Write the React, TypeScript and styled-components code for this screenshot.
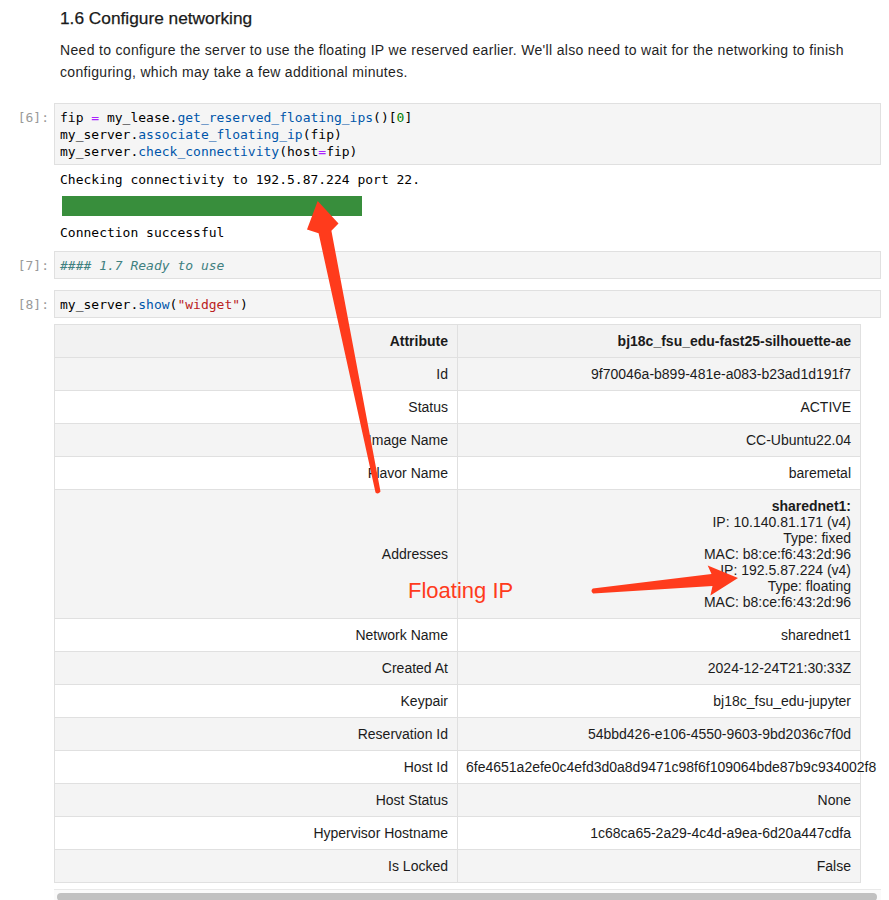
import React from "react";
import styled, { createGlobalStyle } from "styled-components";

const Global = createGlobalStyle`
  html, body { margin: 0; padding: 0; background: #ffffff; }
  body { font-family: "Liberation Sans", Arial, sans-serif; color: #1b1b1b; }
`;

const Page = styled.div`
  position: relative;
  width: 889px;
  height: 900px;
  overflow: hidden;
  padding-top: 6px;
  box-sizing: border-box;
`;

const Markdown = styled.div`
  padding: 0 8px 0 60px;
`;

const Heading = styled.h3`
  margin: 0;
  font-size: 17.3px;
  font-weight: normal;
  line-height: 24px;
  color: #1a1a1a;
  -webkit-text-stroke: 0.25px #1a1a1a;
`;

const Para = styled.p`
  margin: 9px 0 0;
  font-size: 14px;
  line-height: 22px;
  letter-spacing: 0.32px;
  color: #1f1f1f;
`;

const Cell = styled.div<{ $gap: number }>`
  margin-top: ${(p) => p.$gap}px;
`;

const Row = styled.div`
  display: flex;
  align-items: flex-start;
`;

const Prompt = styled.div`
  width: 54px;
  flex: none;
  box-sizing: border-box;
  padding: 6px 5px 0 0;
  text-align: right;
  font: 13px/17px "DejaVu Sans Mono", monospace;
  color: #9a9a9a;
`;

const InputBox = styled.div`
  width: 827px;
  box-sizing: border-box;
  border: 1px solid #e0e0e0;
  background: #f5f5f5;
  padding: 5px 5px 4px;
  font: 13px/17px "DejaVu Sans Mono", monospace;
  white-space: pre;
  color: #000;
`;

const Op = styled.span`
  color: #aa22ff;
`;
const Fn = styled.span`
  color: #0055aa;
`;
const Num = styled.span`
  color: #008000;
`;
const Str = styled.span`
  color: #ba2121;
`;
const Comment = styled.span`
  color: #408080;
  font-style: italic;
`;

const Output = styled.div<{ $top: number }>`
  flex: 1;
  min-width: 0;
  padding: ${(p) => p.$top}px 0 0 6px;
`;

const Stream = styled.div<{ $gap?: number }>`
  font: 13px/17px "DejaVu Sans Mono", monospace;
  color: #000;
  white-space: pre;
  margin-top: ${(p) => p.$gap ?? 0}px;
`;

const Progress = styled.div`
  width: 300px;
  height: 20px;
  margin: 8px 0 0 2px;
  background: #388e3c;
`;

const TableScroll = styled.div`
  width: 827px;
  margin-left: -6px;
  overflow: hidden;
`;

const Table = styled.table`
  width: 807px;
  table-layout: fixed;
  border-collapse: collapse;
  font-size: 14px;
  line-height: 16px;
  color: #1b1b1b;
`;

const Th = styled.th`
  border: 1px solid #e0e0e0;
  padding: 8px 9px 8px 8px;
  text-align: right;
  font-weight: bold;
  white-space: nowrap;
  background: #f2f2f2;
`;

const Tr = styled.tr`
  &:nth-child(odd) {
    background: #f4f4f4;
  }
`;

const Td = styled.td`
  border: 1px solid #e0e0e0;
  padding: 8px 9px 8px 8px;
  text-align: right;
  white-space: nowrap;
  vertical-align: middle;
`;

const Line = styled.div<{ $bold?: boolean }>`
  font-weight: ${(p) => (p.$bold ? "bold" : "normal")};
`;

const Track = styled.div`
  width: 827px;
  box-sizing: border-box;
  margin: 6px 0 0 -6px;
  border-top: 1px solid #e9e9e9;
  background: #fafafa;
  padding: 3px 3px 0;
  height: 16px;
`;

const Thumb = styled.div`
  height: 8px;
  width: 820px;
  border-radius: 4px;
  background: #c1c1c1;
`;

const Overlay = styled.svg`
  position: absolute;
  left: 0;
  top: 0;
  pointer-events: none;
`;

const Label = styled.div`
  position: absolute;
  left: 408px;
  top: 580px;
  font-size: 22px;
  line-height: 22px;
  color: #ff3b1c;
  white-space: nowrap;
`;

const rows: [string, React.ReactNode][] = [
  ["Id", "9f70046a-b899-481e-a083-b23ad1d191f7"],
  ["Status", "ACTIVE"],
  ["Image Name", "CC-Ubuntu22.04"],
  ["Flavor Name", "baremetal"],
  [
    "Addresses",
    <>
      <Line $bold>sharednet1:</Line>
      <Line>IP: 10.140.81.171 (v4)</Line>
      <Line>Type: fixed</Line>
      <Line>MAC: b8:ce:f6:43:2d:96</Line>
      <Line>IP: 192.5.87.224 (v4)</Line>
      <Line>Type: floating</Line>
      <Line>MAC: b8:ce:f6:43:2d:96</Line>
    </>,
  ],
  ["Network Name", "sharednet1"],
  ["Created At", "2024-12-24T21:30:33Z"],
  ["Keypair", "bj18c_fsu_edu-jupyter"],
  ["Reservation Id", "54bbd426-e106-4550-9603-9bd2036c7f0d"],
  ["Host Id", "6fe4651a2efe0c4efd3d0a8d9471c98f6f109064bde87b9c934002f8"],
  ["Host Status", "None"],
  ["Hypervisor Hostname", "1c68ca65-2a29-4c4d-a9ea-6d20a447cdfa"],
  ["Is Locked", "False"],
];

export default function App() {
  return (
    <>
      <Global />
      <Page>
        <Markdown>
          <Heading>1.6 Configure networking</Heading>
          <Para>
            Need to configure the server to use the floating IP we reserved earlier. We'll also need to wait for the
            networking to finish configuring, which may take a few additional minutes.
          </Para>
        </Markdown>

        <Cell $gap={20}>
          <Row>
            <Prompt>[6]:</Prompt>
            <InputBox>
              {"fip "}
              <Op>=</Op>
              {" my_lease."}
              <Fn>get_reserved_floating_ips</Fn>
              {"()["}
              <Num>0</Num>
              {"]\nmy_server."}
              <Fn>associate_floating_ip</Fn>
              {"(fip)\nmy_server."}
              <Fn>check_connectivity</Fn>
              {"(host"}
              <Op>=</Op>
              {"fip)"}
            </InputBox>
          </Row>
          <Row>
            <Prompt />
            <Output $top={6}>
              <Stream>Checking connectivity to 192.5.87.224 port 22.</Stream>
              <Progress />
              <Stream $gap={8}>Connection successful</Stream>
            </Output>
          </Row>
        </Cell>

        <Cell $gap={10}>
          <Row>
            <Prompt>[7]:</Prompt>
            <InputBox>
              <Comment>#### 1.7 Ready to use</Comment>
            </InputBox>
          </Row>
        </Cell>

        <Cell $gap={11}>
          <Row>
            <Prompt>[8]:</Prompt>
            <InputBox>
              {"my_server."}
              <Fn>show</Fn>
              {"("}
              <Str>"widget"</Str>
              {")"}
            </InputBox>
          </Row>
          <Row>
            <Prompt />
            <Output $top={6}>
              <TableScroll>
                <Table>
                  <thead>
                    <tr>
                      <Th>Attribute</Th>
                      <Th>bj18c_fsu_edu-fast25-silhouette-ae</Th>
                    </tr>
                  </thead>
                  <tbody>
                    {rows.map(([k, v]) => (
                      <Tr key={k}>
                        <Td>{k}</Td>
                        <Td>{v}</Td>
                      </Tr>
                    ))}
                  </tbody>
                </Table>
              </TableScroll>
              <Track>
                <Thumb />
              </Track>
            </Output>
          </Row>
        </Cell>

        <Overlay width="889" height="900" viewBox="0 0 889 900">
          <path
            d="M317.7 201 L338.5 223.5 L331.4 230.7 L380.5 491.5 Q378 495 375.5 492.5 L318.6 233.3 L307 229.5 Z"
            fill="#ff3b1c"
          />
          <path
            d="M738 578 L710.4 595.4 L712.5 586 L593.2 593.5 Q590 591 592.8 588.5 L711.5 574 L707.7 565.6 Z"
            fill="#ff3b1c"
          />
        </Overlay>
        <Label>Floating IP</Label>
      </Page>
    </>
  );
}
